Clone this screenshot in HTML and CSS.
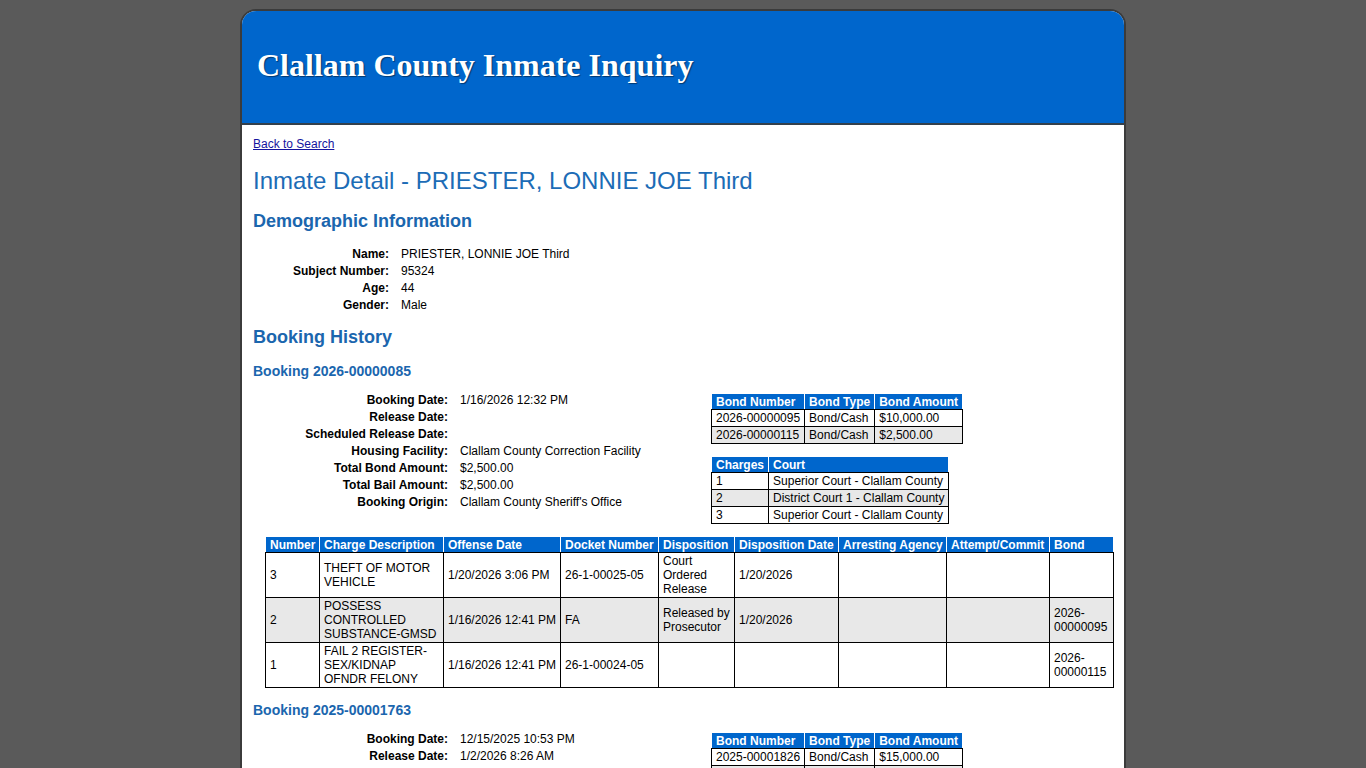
FILE: index.html
```html
<!DOCTYPE html>
<html lang="en">
<head>
<meta charset="utf-8">
<title>Clallam County Inmate Inquiry</title>
<link rel="stylesheet" href="styles.css">
</head>
<body>
<div class="page">
  <header class="banner">
    <h1 class="site-title">Clallam County Inmate Inquiry</h1>
  </header>
  <main class="content">
    <a class="back" href="#">Back to Search</a>
    <h2 class="page-title">Inmate Detail - PRIESTER, LONNIE JOE Third</h2>

    <h3 class="section">Demographic Information</h3>
    <dl class="facts facts-demo">
      <dt>Name:</dt><dd>PRIESTER, LONNIE JOE Third</dd>
      <dt>Subject Number:</dt><dd>95324</dd>
      <dt>Age:</dt><dd>44</dd>
      <dt>Gender:</dt><dd>Male</dd>
    </dl>

    <h3 class="section section-history">Booking History</h3>

    <section class="booking">
      <h4 class="booking-title">Booking 2026-00000085</h4>
      <div class="booking-top">
        <dl class="facts facts-booking">
          <dt>Booking Date:</dt><dd>1/16/2026 12:32 PM</dd>
          <dt>Release Date:</dt><dd></dd>
          <dt>Scheduled Release Date:</dt><dd></dd>
          <dt>Housing Facility:</dt><dd>Clallam County Correction Facility</dd>
          <dt>Total Bond Amount:</dt><dd>$2,500.00</dd>
          <dt>Total Bail Amount:</dt><dd>$2,500.00</dd>
          <dt>Booking Origin:</dt><dd>Clallam County Sheriff's Office</dd>
        </dl>
        <div class="booking-side">
          <table class="grid small">
            <thead><tr><th>Bond Number</th><th>Bond Type</th><th>Bond Amount</th></tr></thead>
            <tbody>
              <tr><td>2026-00000095</td><td>Bond/Cash</td><td>$10,000.00</td></tr>
              <tr class="alt"><td>2026-00000115</td><td>Bond/Cash</td><td>$2,500.00</td></tr>
            </tbody>
          </table>
          <table class="grid small">
            <thead><tr><th>Charges</th><th>Court</th></tr></thead>
            <tbody>
              <tr><td>1</td><td>Superior Court - Clallam County</td></tr>
              <tr class="alt"><td>2</td><td>District Court 1 - Clallam County</td></tr>
              <tr><td>3</td><td>Superior Court - Clallam County</td></tr>
            </tbody>
          </table>
        </div>
      </div>
      <table class="grid charges">
        <colgroup>
          <col class="c-num"><col class="c-desc"><col class="c-off"><col class="c-dock"><col class="c-disp"><col class="c-dd"><col class="c-agency"><col class="c-att"><col class="c-bond">
        </colgroup>
        <thead>
          <tr><th>Number</th><th>Charge Description</th><th>Offense Date</th><th>Docket Number</th><th>Disposition</th><th>Disposition Date</th><th>Arresting Agency</th><th>Attempt/Commit</th><th>Bond</th></tr>
        </thead>
        <tbody>
          <tr><td>3</td><td>THEFT OF MOTOR VEHICLE</td><td class="nowrap">1/20/2026 3:06 PM</td><td>26-1-00025-05</td><td>Court Ordered Release</td><td>1/20/2026</td><td></td><td></td><td></td></tr>
          <tr class="alt"><td>2</td><td>POSSESS CONTROLLED SUBSTANCE-GMSD</td><td class="nowrap">1/16/2026 12:41 PM</td><td>FA</td><td>Released by Prosecutor</td><td>1/20/2026</td><td></td><td></td><td>2026-00000095</td></tr>
          <tr><td>1</td><td>FAIL 2 REGISTER-SEX/KIDNAP OFNDR FELONY</td><td class="nowrap">1/16/2026 12:41 PM</td><td>26-1-00024-05</td><td></td><td></td><td></td><td></td><td>2026-00000115</td></tr>
        </tbody>
      </table>
    </section>

    <section class="booking">
      <h4 class="booking-title">Booking 2025-00001763</h4>
      <div class="booking-top">
        <dl class="facts facts-booking">
          <dt>Booking Date:</dt><dd>12/15/2025 10:53 PM</dd>
          <dt>Release Date:</dt><dd>1/2/2026 8:26 AM</dd>
          <dt>Scheduled Release Date:</dt><dd></dd>
          <dt>Housing Facility:</dt><dd>Clallam County Correction Facility</dd>
          <dt>Total Bond Amount:</dt><dd>$0.00</dd>
          <dt>Total Bail Amount:</dt><dd>$0.00</dd>
          <dt>Booking Origin:</dt><dd>Clallam County Sheriff's Office</dd>
        </dl>
        <div class="booking-side">
          <table class="grid small">
            <thead><tr><th>Bond Number</th><th>Bond Type</th><th>Bond Amount</th></tr></thead>
            <tbody>
              <tr><td>2025-00001826</td><td>Bond/Cash</td><td>$15,000.00</td></tr>
              <tr class="alt"><td>2025-00001827</td><td>Bond/Cash</td><td>$5,000.00</td></tr>
            </tbody>
          </table>
        </div>
      </div>
    </section>
  </main>
</div>
</body>
</html>
```

FILE: styles.css
```css
html, body {
  margin: 0;
  padding: 0;
}
body {
  background: #5a5a5a;
  font-family: "Liberation Sans", Arial, sans-serif;
  font-size: 12px;
  color: #000;
}
.page {
  width: 882px;
  margin: 9px auto 0;
  border: 2px solid #3b3b3b;
  border-bottom: none;
  border-radius: 16px 16px 0 0;
  overflow: hidden;
  background: #fff;
  min-height: 800px;
}
.banner {
  background: #0066cc;
  height: 112px;
  border-bottom: 2px solid #34404c;
  padding-left: 15px;
}
.site-title {
  margin: 0;
  padding-top: 35px;
  font-family: "Liberation Serif", "Times New Roman", serif;
  font-weight: bold;
  font-size: 32px;
  line-height: 38px;
  color: #fff;
  text-shadow: 1px 1px 1px rgba(0, 0, 0, 0.45);
}
.content {
  padding: 12px 11px 20px;
}
.back {
  display: block;
  width: max-content;
  font-size: 12px;
  line-height: 14px;
  color: #14149e;
  text-decoration: underline;
}
.page-title {
  margin: 16px 0 0;
  font-size: 24px;
  line-height: 28px;
  font-weight: normal;
  color: #1c6cb6;
}
.section {
  margin: 15px 0 0;
  font-size: 18px;
  line-height: 22px;
  font-weight: bold;
  color: #1b66ae;
}
.section-history {
  margin-top: 12px;
}
.facts {
  display: grid;
  column-gap: 12px;
  margin: 0;
  line-height: 17px;
}
.facts dt {
  font-weight: bold;
  text-align: right;
}
.facts dd {
  margin: 0;
  min-height: 17px;
}
.facts-demo {
  grid-template-columns: 136px auto;
  margin-top: 14px;
}
.facts-booking {
  grid-template-columns: 195px auto;
  flex: 0 0 458px;
  align-content: start;
}
.booking-title {
  margin: 14px 0 0;
  font-size: 14px;
  line-height: 18px;
  font-weight: bold;
  color: #1b66ae;
}
.booking + .booking .booking-title {
  margin-top: 13px;
}
.booking-top {
  display: flex;
  margin-top: 12px;
}
.booking-side {
  display: flex;
  flex-direction: column;
  align-items: flex-start;
  gap: 13px;
  margin-top: 2px;
}
.grid {
  border-collapse: collapse;
  font-size: 12px;
  line-height: 14px;
}
.grid th {
  background: #0066cc;
  color: #fff;
  font-weight: bold;
  text-align: left;
  padding: 1px 4px 0;
  border-left: 1px solid #fff;
  border-right: 1px solid #fff;
  border-bottom: 1px solid #000;
  white-space: nowrap;
}
.grid td {
  border: 1px solid #000;
  padding: 1px 4px;
  vertical-align: middle;
}
.grid tr.alt td {
  background: #e8e8e8;
}
.small td,
.grid td.nowrap {
  white-space: nowrap;
}
.charges {
  table-layout: fixed;
  width: 848px;
  margin: 13px 0 0 12px;
}
.c-num { width: 54px; }
.c-desc { width: 124px; }
.c-off { width: 117px; }
.c-dock { width: 98px; }
.c-disp { width: 76px; }
.c-dd { width: 104px; }
.c-agency { width: 108px; }
.c-att { width: 103px; }
.c-bond { width: 64px; }
.charges td {
  height: 42px;
}
```
